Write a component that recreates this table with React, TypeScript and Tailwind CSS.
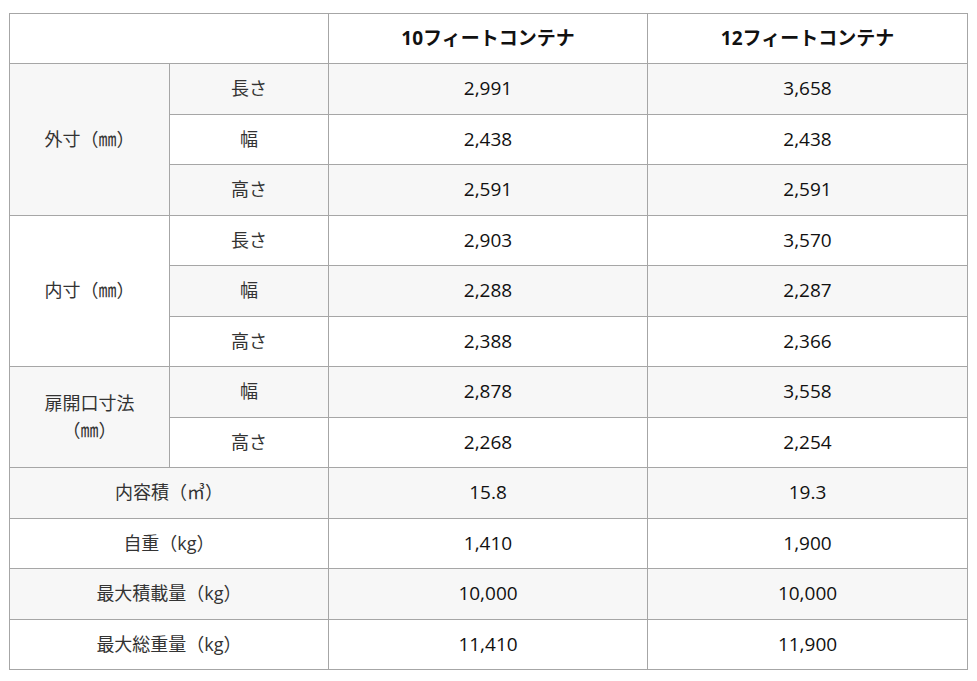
import React from "react";

const font = { fontFamily: '"Open Sans", "Noto Sans CJK JP", sans-serif' };

type Row = { group?: { label: React.ReactNode; span: number }; label?: string; full?: string; a: string; b: string };

const rows: Row[] = [
  { group: { label: "外寸（㎜）", span: 3 }, label: "長さ", a: "2,991", b: "3,658" },
  { label: "幅", a: "2,438", b: "2,438" },
  { label: "高さ", a: "2,591", b: "2,591" },
  { group: { label: "内寸（㎜）", span: 3 }, label: "長さ", a: "2,903", b: "3,570" },
  { label: "幅", a: "2,288", b: "2,287" },
  { label: "高さ", a: "2,388", b: "2,366" },
  { group: { label: (<>扉開口寸法<br />（㎜）</>), span: 2 }, label: "幅", a: "2,878", b: "3,558" },
  { label: "高さ", a: "2,268", b: "2,254" },
  { full: "内容積（㎥）", a: "15.8", b: "19.3" },
  { full: "自重（kg）", a: "1,410", b: "1,900" },
  { full: "最大積載量（kg）", a: "10,000", b: "10,000" },
  { full: "最大総重量（kg）", a: "11,410", b: "11,900" },
];

const cell = "border border-[#a6a6a6] text-center align-middle px-2 leading-[27px]";

export default function App() {
  return (
    <div className="bg-white w-[977px] h-[681px] pt-[13px] pl-[9px]" style={font}>
      <table className="border-collapse w-[958px] text-[#222] table-fixed">
        <colgroup>
          <col className="w-[160px]" />
          <col className="w-[159px]" />
          <col className="w-[319px]" />
          <col className="w-[320px]" />
        </colgroup>
        <thead>
          <tr className="h-[50px] bg-white">
            <th colSpan={2} className={cell}></th>
            <th className={cell + " text-[19px] font-bold text-[#111]"}>10フィートコンテナ</th>
            <th className={cell + " text-[19px] font-bold text-[#111]"}>12フィートコンテナ</th>
          </tr>
        </thead>
        <tbody>
          {rows.map((r, i) => (
            <tr key={i} className={"h-[50.5px] " + (i % 2 === 0 ? "bg-[#f7f7f7]" : "bg-white")}>
              {r.group && (
                <td rowSpan={r.group.span} className={cell + " text-[18px] text-[#333]"}>
                  {r.group.label}
                </td>
              )}
              {r.label && <td className={cell + " text-[18px] text-[#333]"}>{r.label}</td>}
              {r.full && (
                <td colSpan={2} className={cell + " text-[18px] text-[#333]"}>
                  {r.full}
                </td>
              )}
              <td className={cell + " text-[19px] font-medium text-[#111]"}>{r.a}</td>
              <td className={cell + " text-[19px] font-medium text-[#111]"}>{r.b}</td>
            </tr>
          ))}
        </tbody>
      </table>
    </div>
  );
}
